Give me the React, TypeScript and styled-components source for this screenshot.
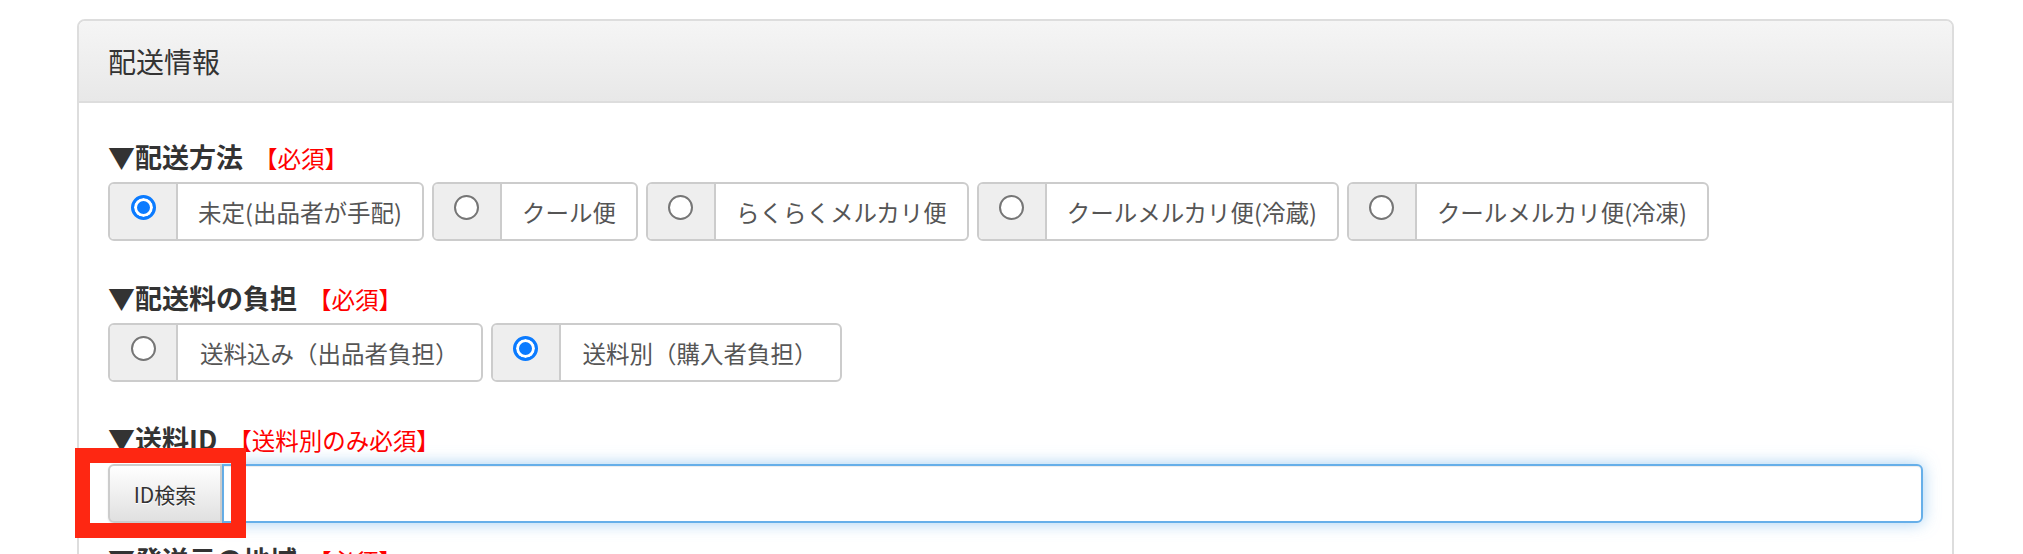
import React from 'react';
import styled, { createGlobalStyle } from 'styled-components';

const GlobalStyle = createGlobalStyle`
  html, body {
    margin: 0;
    background: #fff;
  }
  body {
    font-family: 'Noto Sans CJK JP', 'Noto Sans', sans-serif;
    color: #333;
    overflow: hidden;
  }
`;

const Page = styled.div`
  padding: 19px 69px 0 77px;
`;

const Panel = styled.section`
  border: 2px solid #ddd;
  border-radius: 8px;
  background: #fff;
`;

const PanelHeading = styled.header`
  display: flex;
  align-items: center;
  height: 80px;
  padding: 0 29px;
  background: linear-gradient(to bottom, #f5f5f5 0%, #e8e8e8 100%);
  border-bottom: 2px solid #ddd;
  border-radius: 6px 6px 0 0;
`;

const PanelTitle = styled.h3`
  margin: 0;
  font-size: 28px;
  font-weight: 400;
  color: #333;
`;

const PanelBody = styled.div`
  padding: 37px 29px 0;
`;

const FieldTitle = styled.h4<{ $gap?: number }>`
  display: flex;
  align-items: baseline;
  margin: ${({ $gap }) => $gap ?? 0}px 0 0;
  font-size: 27px;
  line-height: 34px;
  font-weight: 700;
  color: #333;
`;

const Required = styled.span`
  margin-left: 11px;
  font-size: 23.5px;
  font-weight: 400;
  color: #f00;
`;

const ChoiceRow = styled.div`
  display: flex;
  gap: 8px;
  margin: 7px 0 0;
`;

const Choice = styled.label`
  display: flex;
  height: 59px;
  box-sizing: border-box;
  border: 2px solid #ccc;
  border-radius: 6px;
  overflow: hidden;
  background: #fff;
`;

const Addon = styled.span`
  display: flex;
  justify-content: center;
  align-items: flex-start;
  flex-shrink: 0;
  width: 66px;
  padding-top: 11px;
  background: #eee;
  border-right: 2px solid #ccc;
`;

const Radio = styled.input`
  appearance: none;
  box-sizing: border-box;
  width: 25px;
  height: 25px;
  margin: 0;
  border-radius: 50%;
  border: 2px solid #767676;
  background: #fff;

  &:checked {
    border: 3px solid #0b7bff;
    background: #0b7bff;
    box-shadow: inset 0 0 0 3px #fff;
  }
`;

const ChoiceText = styled.span<{ $wide?: boolean }>`
  display: flex;
  align-items: center;
  padding: 0 ${({ $wide }) => ($wide ? 22 : 20)}px;
  font-size: 23.5px;
  color: #555;
  white-space: nowrap;
`;

const InputGroup = styled.div`
  position: relative;
  display: flex;
  height: 59px;
  margin-top: 7px;
`;

const SearchButton = styled.button`
  position: relative;
  z-index: 1;
  width: 114px;
  flex-shrink: 0;
  padding: 0;
  border: 2px solid #ccc;
  border-radius: 6px 0 0 6px;
  background: linear-gradient(to bottom, #fff 0%, #e0e0e0 100%);
  box-shadow: 0 1px 2px rgba(0, 0, 0, 0.1);
  font-family: inherit;
  font-size: 21px;
  color: #333;
  text-shadow: 0 1px 0 #fff;
`;

const IdInput = styled.input`
  flex: 1;
  min-width: 0;
  box-sizing: border-box;
  border: 2px solid #66afe9;
  border-radius: 0 6px 6px 0;
  outline: none;
  box-shadow: inset 0 1px 1px rgba(0, 0, 0, 0.075), 0 0 16px rgba(102, 175, 233, 0.6);
  font-family: inherit;
  font-size: 21px;
  padding: 0 14px;
`;

// red annotation frame drawn over the search button
const Highlight = styled.div`
  position: absolute;
  left: -33px;
  top: -16px;
  z-index: 2;
  width: 171px;
  height: 90px;
  box-sizing: border-box;
  border: 15px solid #fe2712;
  pointer-events: none;
`;

const methods = ['未定(出品者が手配)', 'クール便', 'らくらくメルカリ便', 'クールメルカリ便(冷蔵)', 'クールメルカリ便(冷凍)'];
const burdens = ['送料込み（出品者負担）', '送料別（購入者負担）'];

type ChoicesProps = {
  name: string;
  options: string[];
  selected: number;
  wide?: boolean;
};

const Choices = ({ name, options, selected, wide }: ChoicesProps) => (
  <ChoiceRow>
    {options.map((option, i) => (
      <Choice key={option}>
        <Addon>
          <Radio type='radio' name={name} defaultChecked={i === selected} />
        </Addon>
        <ChoiceText $wide={wide}>{option}</ChoiceText>
      </Choice>
    ))}
  </ChoiceRow>
);

const App = () => {
  return (
    <Page>
      <GlobalStyle />
      <Panel>
        <PanelHeading>
          <PanelTitle>配送情報</PanelTitle>
        </PanelHeading>
        <PanelBody>
          <FieldTitle>
            ▼配送方法<Required>【必須】</Required>
          </FieldTitle>
          <Choices name='method' options={methods} selected={0} />

          <FieldTitle $gap={40}>
            ▼配送料の負担<Required>【必須】</Required>
          </FieldTitle>
          <Choices name='burden' options={burdens} selected={1} wide />

          <FieldTitle $gap={40}>
            ▼送料ID<Required>【送料別のみ必須】</Required>
          </FieldTitle>
          <InputGroup>
            <SearchButton type='button'>ID検索</SearchButton>
            <IdInput type='text' />
            <Highlight />
          </InputGroup>

          <FieldTitle $gap={20}>
            ▼発送元の地域<Required>【必須】</Required>
          </FieldTitle>
        </PanelBody>
      </Panel>
    </Page>
  );
};

export default App;
